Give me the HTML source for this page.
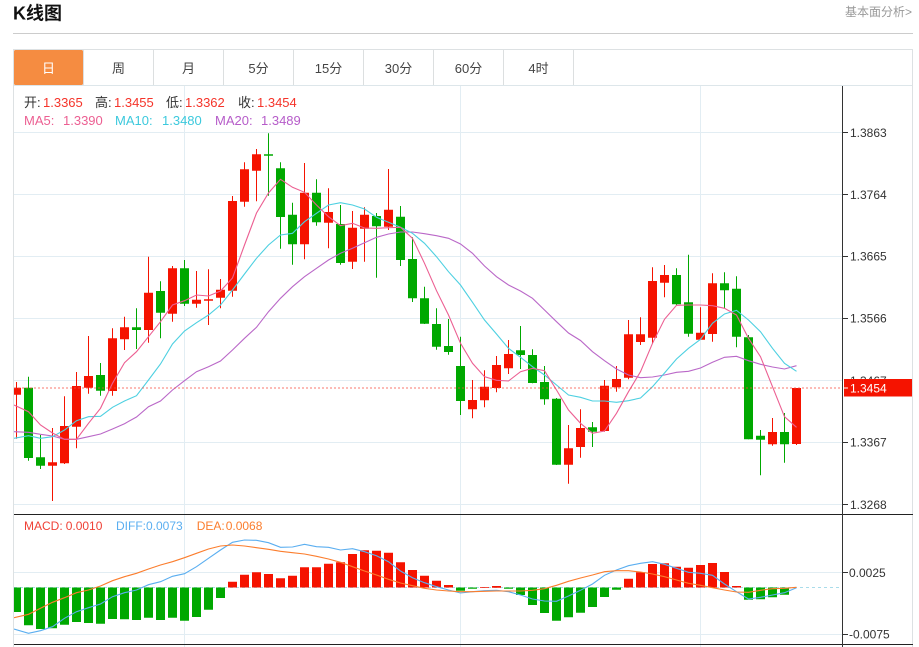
<!DOCTYPE html>
<html lang="zh">
<head>
<meta charset="utf-8">
<title>K线图</title>
<style>
html,body{margin:0;padding:0;background:#fff;width:919px;height:647px;overflow:hidden}
svg{display:block;font-family:"Liberation Sans","Noto Sans CJK SC",sans-serif}
</style>
</head>
<body>
<svg width="919" height="647" viewBox="0 0 919 647" xmlns="http://www.w3.org/2000/svg">
<defs><clipPath id="c"><rect x="14" y="86" width="828" height="561"/></clipPath></defs>
<rect width="919" height="647" fill="#fff"/>

<!-- header -->
<text x="13" y="19.5" font-size="18" font-weight="700" fill="#111">K线图</text>
<text x="845" y="16" font-size="12" fill="#999">基本面分析&gt;</text>
<rect x="13" y="33" width="900" height="1" fill="#ccc"/>

<!-- tabs -->
<rect x="13" y="49" width="900" height="1" fill="#dde1e3"/>
<rect x="13" y="85" width="900" height="1" fill="#dde6ea"/>
<rect x="14" y="50" width="69" height="35" rx="1.5" fill="#f58c41"/>
<path d="M83.5 50V85M153.5 50V85M223.5 50V85M293.5 50V85M363.5 50V85M433.5 50V85M503.5 50V85M573.5 50V85" stroke="#dcdfe0" fill="none"/>
<g font-size="13" text-anchor="middle" fill="#444">
<text x="48.5" y="73" fill="#fff">日</text>
<text x="118.5" y="73">周</text>
<text x="188.5" y="73">月</text>
<text x="258.5" y="73">5分</text>
<text x="328.5" y="73">15分</text>
<text x="398.5" y="73">30分</text>
<text x="468.5" y="73">60分</text>
<text x="538.5" y="73">4时</text>
</g>

<!-- frame -->
<rect x="13" y="49" width="1" height="598" fill="#dde1e3"/>
<rect x="912" y="49" width="1" height="598" fill="#dde1e3"/>

<!-- grid -->
<path d="M14 132.5H842M14 194.5H842M14 256.5H842M14 318.5H842M14 380.5H842M14 442.5H842M14 504.5H842M14 572.5H842M14 634.5H842M184.5 86V647M460.5 86V647M700.5 86V647" stroke="#e2edf3" fill="none"/>

<g clip-path="url(#c)">
<!-- candles: wicks -->
<path stroke="#f51300" fill="none" d="M16.5 382V438.7M52.5 428V501M64.5 396.3V464M76.5 372V448.3M88.5 336V393.7M112.5 328.3V395.7M124.5 316.7V350M148.5 256.7V342.7M172.5 266V321.7M196.5 271V307.7M208.5 269.3V325M220.5 279V308.3M232.5 196V296.7M244.5 162.3V206.7M256.5 149V201.3M304.5 163V259.3M328.5 188.3V248.3M352.5 211V269M364.5 207.3V261.7M388.5 169V230M472.5 380V418.3M484.5 370.3V407.3M496.5 356V392.3M508.5 340V374M568.5 425V483.7M580.5 409.3V457.7M604.5 380V431.7M616.5 366V391.7M628.5 320V379.3M640.5 317.3V345M652.5 267.3V343.7M664.5 265V297.3M700.5 307.3V340M712.5 273.3V341.7M772.5 418V445.7M796.5 388V445"/>
<path stroke="#00a800" fill="none" d="M28.5 376.7V460.7M40.5 435V469M100.5 363V395.7M136.5 308.3V349M160.5 281.3V338.3M184.5 260V306M268.5 133.3V195.7M280.5 162.3V248.7M292.5 202.7V264.7M316.5 179.3V225.7M340.5 205V264.7M376.5 213V277.7M400.5 206V266M412.5 237.3V302M424.5 286.7V324M436.5 308.3V349.7M448.5 319V354.7M460.5 336.7V415M520.5 326V369M532.5 349.3V383.3M544.5 366V404.7M556.5 398V465M592.5 422V447M676.5 268.3V305M688.5 254.7V336.7M724.5 272.3V308.3M736.5 276.3V347.3M748.5 335V439.3M760.5 430V475.3M784.5 413V462.7"/>
<!-- candles: bodies -->
<path fill="#f51300" d="M12 387.7H21V394.7H12zM48 462.3H57V465.7H48zM60 426H69V463.3H60zM72 386H81V426.7H72zM84 376H93V387.7H84zM108 338.3H117V391H108zM120 327.3H129V339.3H120zM144 292.7H153V330H144zM168 268.3H177V313.7H168zM192 299.7H201V303.7H192zM204 299.3H213V300.7H204zM216 289.7H225V297.7H216zM228 201H237V290.7H228zM240 169.3H249V201.7H240zM252 154.3H261V170.7H252zM300 192.7H309V244.3H300zM324 212H333V222.7H324zM348 227.7H357V261.7H348zM360 214.7H369V228.7H360zM384 209.7H393V226.7H384zM468 400H477V409.3H468zM480 386.7H489V400.3H480zM492 365H501V388H492zM504 354H513V368.3H504zM564 448.3H573V464.7H564zM576 428H585V447H576zM600 385.7H609V431H600zM612 379H621V387.3H612zM624 334.3H633V377.7H624zM636 334.3H645V342H636zM648 281H657V337.7H648zM660 275H669V282.7H660zM696 332.7H705V339.7H696zM708 283.3H717V334H708zM768 432H777V444.3H768zM792 388H801V444H792z"/>
<path fill="#00a800" d="M24 387.7H33V458H24zM36 457.3H45V465.7H36zM96 375H105V390.7H96zM132 327.3H141V330H132zM156 291H165V312.7H156zM180 268.3H189V303.7H180zM264 154.3H273V155.7H264zM276 168.3H285V217H276zM288 214.7H297V244.3H288zM312 192.7H321V222.3H312zM336 224H345V263H336zM372 216H381V226.3H372zM396 216.7H405V260H396zM408 259H417V298.3H408zM420 298.3H429V323.7H420zM432 324H441V346.7H432zM444 346H453V352H444zM456 366H465V401H456zM516 350.3H525V355H516zM528 355H537V383H528zM540 382H549V399.3H540zM552 398.7H561V464.7H552zM588 427.3H597V431.7H588zM672 275H681V304.3H672zM684 302.3H693V333.7H684zM720 283.3H729V290.3H720zM732 288.7H741V336.7H732zM744 337.3H753V439.3H744zM756 435.7H765V439.7H756zM780 432H789V444.3H780z"/>

<!-- MA20 -->
<polyline fill="none" stroke="#ba68c8" stroke-width="1.1" points="14,431.7 28.5,432.3 40.5,434.3 52.5,436 64.5,439.3 76.5,439.3 88.5,436.7 100.5,434 112.5,429 124.5,423.7 136.5,417 148.5,406.7 160.5,401 172.5,390 184.5,380.7 196.5,371.7 208.5,366.7 220.5,361 232.5,350 244.5,338.3 256.5,327.3 268.5,311.7 280.5,298.3 292.5,286.7 304.5,276.7 316.5,268.3 328.5,260 340.5,253.3 352.5,248.3 364.5,242.7 376.5,237.3 388.5,234 400.5,232 412.5,232 424.5,233.7 436.5,235.7 448.5,238.3 460.5,244 472.5,253.3 484.5,266 496.5,276.7 508.5,285 520.5,291 532.5,298.3 544.5,310 556.5,321.7 568.5,333 580.5,340.5 592.5,351.7 604.5,360.7 616.5,369 628.5,375 640.5,377.7 652.5,377 664.5,375 676.5,372.3 688.5,371.3 700.5,368 712.5,362.3 724.5,357.3 736.5,356.3 748.5,360.7 760.5,364.3 772.5,367 784.5,369 796.5,365.7"/>
<!-- MA10 -->
<polyline fill="none" stroke="#4dd0e1" stroke-width="1.1" points="14,438.3 28.5,435.7 40.5,438.3 52.5,436.7 64.5,430 76.5,420.7 88.5,416.7 100.5,416.3 112.5,407.3 124.5,401 136.5,395.7 148.5,380 160.5,364 172.5,344 184.5,331 196.5,322.7 208.5,315 220.5,305 232.5,290 244.5,274 256.5,258.3 268.5,245 280.5,235 292.5,233.3 304.5,221.7 316.5,213.3 328.5,205 340.5,202.7 352.5,205 364.5,209 376.5,217.3 388.5,222.3 400.5,227.3 412.5,233.3 424.5,243.3 436.5,256.7 448.5,271.7 460.5,285 472.5,302.3 484.5,320 496.5,334 508.5,348.3 520.5,357.3 532.5,366.7 544.5,375 556.5,385 568.5,395 580.5,397.3 592.5,401 604.5,401 616.5,402.3 628.5,400.7 640.5,398 652.5,386.7 664.5,373 676.5,359 688.5,348.3 700.5,339.3 712.5,323.3 724.5,314 736.5,310.3 748.5,320 760.5,331.7 772.5,348.3 784.5,363.3 796.5,371.3"/>
<!-- MA5 -->
<polyline fill="none" stroke="#ec5f92" stroke-width="1.1" points="14,405 28.5,411.7 40.5,425 52.5,433 64.5,439.3 76.5,439.3 88.5,423.3 100.5,408.3 112.5,383.3 124.5,362.7 136.5,351.7 148.5,336.7 160.5,321.7 172.5,305 184.5,300.7 196.5,295 208.5,296 220.5,291 232.5,278 244.5,245 256.5,213 268.5,193 280.5,179.3 292.5,187.3 304.5,192.3 316.5,205 328.5,216.7 340.5,225.7 352.5,223.3 364.5,228 376.5,228.3 388.5,227.7 400.5,227.3 412.5,238.3 424.5,263.3 436.5,290.7 448.5,315 460.5,343.3 472.5,363.3 484.5,376.7 496.5,380.3 508.5,381 520.5,371.7 532.5,368.3 544.5,370.7 556.5,390 568.5,410 580.5,423.3 592.5,433.3 604.5,431 616.5,413.3 628.5,391.7 640.5,371.7 652.5,343.3 664.5,319.3 676.5,305.3 688.5,305 700.5,305 712.5,305.7 724.5,308.3 736.5,315 748.5,338.3 760.5,356.7 772.5,386.7 784.5,416.7 796.5,427.3"/>

<!-- last price line -->
<path d="M14 388H842" stroke="#f5493c" stroke-opacity=".75" stroke-dasharray="2 2" fill="none"/>

<!-- MACD baseline -->
<path d="M14 587.5H842" stroke="#a9dcea" stroke-dasharray="3 3" fill="none"/>
<!-- MACD bars -->
<path fill="#00a800" d="M12 587.5H21V612H12zM24 587.5H33V625.3H24zM36 587.5H45V629H36zM48 587.5H57V628.3H48zM60 587.5H69V624.7H60zM72 587.5H81V622H72zM84 587.5H93V623H84zM96 587.5H105V623.7H96zM108 587.5H117V619H108zM120 587.5H129V619.3H120zM132 587.5H141V620H132zM144 587.5H153V617.7H144zM156 587.5H165V620H156zM168 587.5H177V617.7H168zM180 587.5H189V620.7H180zM192 587.5H201V617H192zM204 587.5H213V609.7H204zM216 587.5H225V598H216zM456 587.5H465V590.7H456zM468 587.5H477V588.7H468zM504 587.5H513V588.7H504zM516 587.5H525V595H516zM528 587.5H537V605H528zM540 587.5H549V613H540zM552 587.5H561V620.7H552zM564 587.5H573V617.3H564zM576 587.5H585V612.7H576zM588 587.5H597V607H588zM600 587.5H609V597H600zM612 587.5H621V589.7H612zM744 587.5H753V599.7H744zM756 587.5H765V599.3H756zM768 587.5H777V597.3H768zM780 587.5H789V594.7H780z"/>
<path fill="#f51300" d="M228 581.7H237V587.5H228zM240 574.7H249V587.5H240zM252 572.3H261V587.5H252zM264 574H273V587.5H264zM276 578.3H285V587.5H276zM288 575.7H297V587.5H288zM300 567.3H309V587.5H300zM312 567.3H321V587.5H312zM324 563.7H333V587.5H324zM336 562.3H345V587.5H336zM348 554H357V587.5H348zM360 550.3H369V587.5H360zM372 550.7H381V587.5H372zM384 552.7H393V587.5H384zM396 562.3H405V587.5H396zM408 570H417V587.5H408zM420 575.7H429V587.5H420zM432 580.7H441V587.5H432zM444 585H453V587.5H444zM480 587H489V587.7H480zM492 586H501V587.7H492zM624 578.7H633V587.5H624zM636 572.3H645V587.5H636zM648 564H657V587.5H648zM660 563.3H669V587.5H660zM672 566.7H681V587.5H672zM684 567.7H693V587.5H684zM696 565H705V587.5H696zM708 563H717V587.5H708zM720 572H729V587.5H720zM732 586H741V587.5H732z"/>
<!-- DIFF -->
<polyline fill="none" stroke="#5aaef0" stroke-width="1.1" points="14,629 28.5,633.3 40.5,630.7 52.5,626.7 64.5,618.3 76.5,611.7 88.5,607.7 100.5,604 112.5,596.7 124.5,592.7 136.5,590 148.5,584.7 160.5,581.7 172.5,576.3 184.5,573.7 196.5,566.7 208.5,558.3 220.5,550 232.5,542.3 244.5,540 256.5,540.3 268.5,542.7 280.5,547.3 292.5,547 304.5,544.3 316.5,546.7 328.5,547.3 340.5,550 352.5,548.7 364.5,551.7 376.5,555.7 388.5,561.7 400.5,571 412.5,577.7 424.5,582.7 436.5,586.7 448.5,590 460.5,593 472.5,591.7 484.5,590.7 496.5,590.3 508.5,591.7 520.5,595 532.5,599 544.5,601 556.5,601.3 568.5,596 580.5,590.3 592.5,584 604.5,575.3 616.5,570 628.5,565.7 640.5,563.3 652.5,561.7 664.5,564.3 676.5,568.3 688.5,572.3 700.5,573.3 712.5,575.3 724.5,584 736.5,591.7 748.5,599 760.5,597.3 772.5,595 784.5,592.7 796.5,587.7"/>
<!-- DEA -->
<polyline fill="none" stroke="#fb7d2d" stroke-width="1.1" points="14,617.7 28.5,614.3 40.5,608.3 52.5,602.3 64.5,597.7 76.5,592.7 88.5,590 100.5,586 112.5,580.7 124.5,576.7 136.5,573.3 148.5,569 160.5,565 172.5,561.7 184.5,557.7 196.5,553.3 208.5,549 220.5,546 232.5,545 244.5,546 256.5,547.7 268.5,549.3 280.5,551.3 292.5,552.7 304.5,554 316.5,556.3 328.5,559 340.5,562.3 352.5,566.7 364.5,571 376.5,575 388.5,579.3 400.5,583 412.5,585.7 424.5,588.3 436.5,590 448.5,591 460.5,591.7 472.5,591.7 484.5,591.3 496.5,591 508.5,591 520.5,591 532.5,590.3 544.5,588.7 556.5,585.3 568.5,581.3 580.5,578 592.5,575 604.5,571.7 616.5,570.7 628.5,570.7 640.5,572 652.5,574 664.5,576.7 676.5,580 688.5,583.3 700.5,585.3 712.5,587.7 724.5,590 736.5,592 748.5,592.3 760.5,590.3 772.5,588.7 784.5,588.3 796.5,587.3"/>
</g>

<!-- panel separators and axis -->
<rect x="14" y="514" width="899" height="1" fill="#222"/>
<rect x="14" y="644" width="899" height="1" fill="#222"/>
<rect x="842" y="86" width="1" height="561" fill="#333"/>
<path d="M843 132.5H848M843 194.5H848M843 256.5H848M843 318.5H848M843 442.5H848M843 504.5H848M843 572.5H848M843 634.5H848" stroke="#333" fill="none"/>

<!-- axis labels -->
<g font-size="12" fill="#333">
<text x="850" y="137">1.3863</text>
<text x="850" y="199">1.3764</text>
<text x="850" y="260.5">1.3665</text>
<text x="850" y="322.5">1.3566</text>
<text x="850" y="385">1.3467</text>
<text x="850" y="446.5">1.3367</text>
<text x="850" y="509">1.3268</text>
<text x="849" y="577">0.0025</text>
<text x="849" y="638.5">-0.0075</text>
</g>
<rect x="844" y="379" width="68" height="17.5" fill="#f51300"/>
<rect x="844" y="387.5" width="4" height="1" fill="#fff"/>
<text x="850" y="392.7" font-size="12" fill="#fff">1.3454</text>

<!-- legends -->
<g font-size="13" fill="#f5342a">
<text x="24" y="107" fill="#333">开:</text><text x="43" y="107">1.3365</text>
<text x="95" y="107" fill="#333">高:</text><text x="114" y="107">1.3455</text>
<text x="166" y="107" fill="#333">低:</text><text x="185" y="107">1.3362</text>
<text x="238" y="107" fill="#333">收:</text><text x="257" y="107">1.3454</text>
</g>
<g font-size="13">
<text x="24" y="125" fill="#ec5f92">MA5:</text><text x="63" y="125" fill="#ec5f92">1.3390</text>
<text x="115" y="125" fill="#3cc9dd">MA10:</text><text x="162" y="125" fill="#3cc9dd">1.3480</text>
<text x="215" y="125" fill="#b65cc9">MA20:</text><text x="261" y="125" fill="#b65cc9">1.3489</text>
</g>
<g font-size="12">
<text x="24" y="530" fill="#ef4136">MACD:</text><text x="65.7" y="530" fill="#ef4136">0.0010</text>
<text x="116" y="530" fill="#5aaef0">DIFF:</text><text x="146" y="530" fill="#5aaef0">0.0073</text>
<text x="196.7" y="530" fill="#fb7d2d">DEA:</text><text x="225.7" y="530" fill="#fb7d2d">0.0068</text>
</g>
</svg>
</body>
</html>
